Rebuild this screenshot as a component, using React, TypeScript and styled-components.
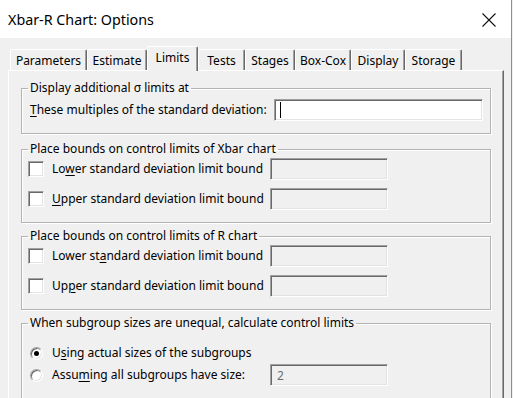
import React from 'react';
import styled, { createGlobalStyle } from 'styled-components';

interface TabInfo {
  label: string;
  width: number;
}

const tabs: TabInfo[] = [
  { label: 'Parameters', width: 77 },
  { label: 'Estimate', width: 60 },
  { label: 'Limits', width: 51 },
  { label: 'Tests', width: 47 },
  { label: 'Stages', width: 50 },
  { label: 'Box-Cox', width: 56 },
  { label: 'Display', width: 54 },
  { label: 'Storage', width: 57 },
];

const ACTIVE_TAB = 2;

const CloseIcon = () => (
  <svg width='14' height='14' viewBox='0 0 14 14'>
    <path d='M0.5 0.5 L13.5 13.5 M13.5 0.5 L0.5 13.5' stroke='#111' strokeWidth='1.1' fill='none' />
  </svg>
);

const App: React.FC = () => {
  return (
    <>
      <GlobalStyle />
      <Window>
        <TitleBar>
          <Title>Xbar-R Chart: Options</Title>
          <CloseButton>
            <CloseIcon />
          </CloseButton>
        </TitleBar>
        <Body>
          <TabRow>
            {tabs.map((tab, i) => (
              <Tab key={tab.label} $active={i === ACTIVE_TAB} $width={tab.width}>
                {tab.label}
              </Tab>
            ))}
          </TabRow>
          <Panel>
            <Group $top={0}>
              <Legend>Display additional σ limits at</Legend>
              <MultipleRow>
                <Label>
                  <u>T</u>hese multiples of the standard deviation:
                </Label>
                <Field $enabled>
                  <Caret />
                </Field>
              </MultipleRow>
            </Group>

            <Group $top={7}>
              <Legend>Place bounds on control limits of Xbar chart</Legend>
              <Rows>
                <BoundRow>
                  <CheckBox />
                  <Label>
                    Lo<u>w</u>er standard deviation limit bound
                  </Label>
                  <Field />
                </BoundRow>
                <BoundRow>
                  <CheckBox />
                  <Label>
                    <u>U</u>pper standard deviation limit bound
                  </Label>
                  <Field />
                </BoundRow>
              </Rows>
            </Group>

            <Group $top={5}>
              <Legend>Place bounds on control limits of R chart</Legend>
              <Rows>
                <BoundRow>
                  <CheckBox />
                  <Label>
                    Lower st<u>a</u>ndard deviation limit bound
                  </Label>
                  <Field />
                </BoundRow>
                <BoundRow>
                  <CheckBox />
                  <Label>
                    Up<u>p</u>er standard deviation limit bound
                  </Label>
                  <Field />
                </BoundRow>
              </Rows>
            </Group>

            <Group $top={5}>
              <Legend>When subgroup sizes are unequal, calculate control limits</Legend>
              <RadioRows>
                <BoundRow>
                  <Radio $checked />
                  <Label>
                    U<u>s</u>ing actual sizes of the subgroups
                  </Label>
                </BoundRow>
                <BoundRow>
                  <Radio />
                  <Label>
                    Assu<u>m</u>ing all subgroups have size:
                  </Label>
                  <Field>
                    <FieldText>2</FieldText>
                  </Field>
                </BoundRow>
              </RadioRows>
            </Group>
          </Panel>
        </Body>
      </Window>
    </>
  );
};

export default App;

const GlobalStyle = createGlobalStyle`
  html, body {
    margin: 0;
    padding: 0;
    background: #f0f0f0;
    overflow: hidden;
  }

  body {
    font-family: 'Noto Sans', 'DejaVu Sans', sans-serif;
    color: #000;
  }
`;

const Window = styled.div`
  width: 511px;
  height: 398px;
  border-right: 1px solid #8e8e8e;
  background: #f0f0f0;
  display: flex;
  flex-direction: column;
  overflow: hidden;
`;

const TitleBar = styled.div`
  display: flex;
  align-items: center;
  justify-content: space-between;
  height: 38px;
  padding: 0 15px 0 8px;
  background: #fff;
  flex-shrink: 0;
`;

const Title = styled.span`
  font-size: 14.3px;
  line-height: 20px;
  margin-top: 1px;
`;

const CloseButton = styled.span`
  display: flex;
  width: 14px;
  height: 14px;
  margin-top: 2px;
`;

const Body = styled.div`
  flex: 1;
  padding-top: 8px;
`;

const TabRow = styled.div`
  display: flex;
  align-items: flex-end;
  height: 24px;
  padding-left: 10px;
`;

const Tab = styled.div<{ $active?: boolean; $width: number }>`
  position: relative;
  z-index: ${(p) => (p.$active ? 2 : 0)};
  box-sizing: border-box;
  width: ${(p) => p.$width}px;
  height: ${(p) => (p.$active ? 25 : 21)}px;
  margin-bottom: ${(p) => (p.$active ? -1 : 0)}px;
  display: flex;
  align-items: center;
  justify-content: center;
  padding-bottom: ${(p) => (p.$active ? 3 : 0)}px;
  font-size: 12px;
  background: #f0f0f0;
  border-top: 1px solid #fff;
  border-left: 1px solid #fff;
  border-right: 1px solid #696969;
  border-radius: 2px 2px 0 0;
  box-shadow: inset -1px 0 0 #a0a0a0;
`;

const Panel = styled.div`
  position: relative;
  z-index: 1;
  box-sizing: border-box;
  width: 496px;
  height: 340px;
  margin-left: 8px;
  padding-top: 9px;
  border-top: 1px solid #fff;
  border-left: 1px solid #fff;
  border-right: 1px solid #696969;
  box-shadow: inset -1px 0 0 #a0a0a0;
`;

const Group = styled.fieldset<{ $top: number }>`
  margin: ${(p) => p.$top}px 12px 0 12px;
  padding: 1px 6px 12px 6px;
  border: 1px solid #b4b4b4;
  box-shadow: 1px 1px 0 #fff, inset 1px 1px 0 #fff;
  min-width: 0;
`;

const Legend = styled.legend`
  padding: 0 2px;
  margin-left: 0;
  font-size: 12px;
  line-height: 16px;
`;

const Label = styled.span`
  font-size: 12px;
  line-height: 16px;
  white-space: nowrap;
  u {
    text-decoration-thickness: 1px;
    text-underline-offset: 2px;
  }
`;

const MultipleRow = styled.div`
  display: grid;
  grid-template-columns: 238px 209px;
  column-gap: 6px;
  align-items: center;
  padding: 1px 0 0 2px;
  height: 23px;
`;

const Rows = styled.div`
  display: flex;
  flex-direction: column;
  gap: 8px;
`;

const RadioRows = styled.div`
  display: flex;
  flex-direction: column;
  padding-top: 10px;
`;

const BoundRow = styled.div`
  display: grid;
  grid-template-columns: 16px 210px 118px;
  column-gap: 8px;
  align-items: center;
  height: 22px;
`;

const Field = styled.div<{ $enabled?: boolean }>`
  box-sizing: border-box;
  height: 22px;
  display: flex;
  align-items: center;
  padding-left: 4px;
  background: ${(p) => (p.$enabled ? '#fff' : '#f0f0f0')};
  border-top: 1px solid #a0a0a0;
  border-left: 1px solid #a0a0a0;
  border-bottom: 1px solid #fff;
  border-right: 1px solid #fff;
  box-shadow: inset 1px 1px 0 #696969, inset -1px -1px 0 #e3e3e3;
`;

const Caret = styled.span`
  display: block;
  width: 1px;
  height: 16px;
  margin-left: 1px;
  background: #000;
`;

const FieldText = styled.span`
  font-size: 12px;
  color: #6d6d6d;
  padding-left: 2px;
`;

const CheckBox = styled.span`
  box-sizing: border-box;
  display: block;
  width: 16px;
  height: 16px;
  background: #fff;
  border-top: 1px solid #a0a0a0;
  border-left: 1px solid #a0a0a0;
  border-bottom: 1px solid #fff;
  border-right: 1px solid #fff;
  box-shadow: inset 1px 1px 0 #696969, inset -1px -1px 0 #e3e3e3;
`;

const Radio = styled.span<{ $checked?: boolean }>`
  box-sizing: border-box;
  display: flex;
  align-items: center;
  justify-content: center;
  width: 13px;
  height: 13px;
  margin-left: 2px;
  border-radius: 50%;
  background: #fff;
  border: 1px solid;
  border-color: #a0a0a0 #fff #fff #a0a0a0;
  box-shadow: inset 1px 1px 0 #696969, inset -1px -1px 0 #e3e3e3;

  &::after {
    content: '';
    display: ${(p) => (p.$checked ? 'block' : 'none')};
    width: 5px;
    height: 5px;
    border-radius: 50%;
    background: #000;
  }
`;
